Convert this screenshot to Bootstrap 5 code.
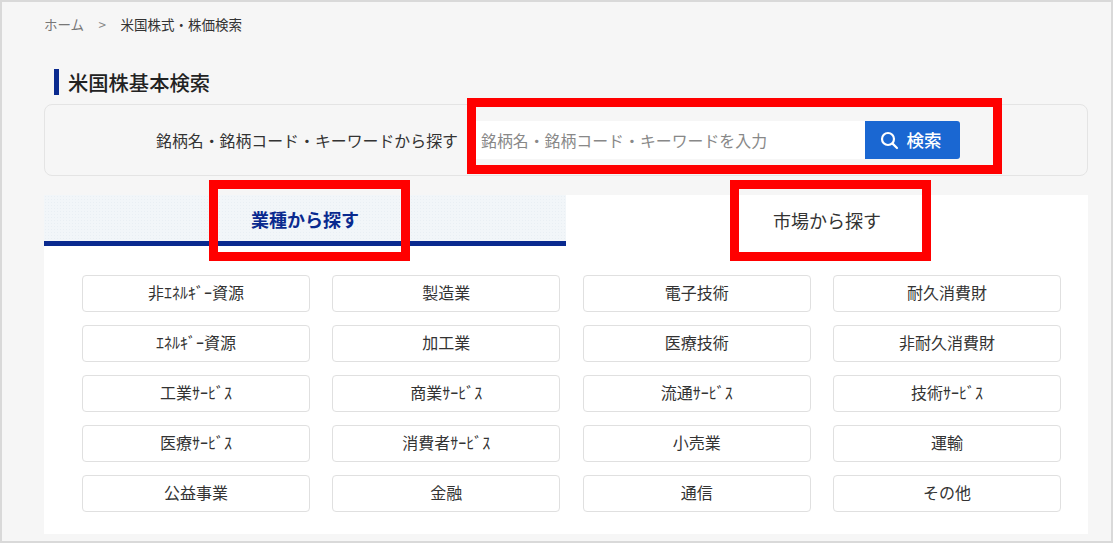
<!DOCTYPE html>
<html lang="ja">
<head>
<meta charset="utf-8">
<title>米国株基本検索</title>
<link href="https://cdn.jsdelivr.net/npm/bootstrap@5.3.0/dist/css/bootstrap.min.css" rel="stylesheet">
<style>
html,body{height:543px;overflow:hidden;background:#f6f6f6}
body{font-family:"Noto Sans CJK JP","Liberation Sans",sans-serif;color:#333;position:relative}
.shot-frame{height:543px;border:2px solid #d9d9d9;padding:0 23px 7px 42px;background:#f6f6f6}
.crumbs{height:44px;margin:0;padding:0;font-size:13.5px;align-items:center;--bs-breadcrumb-margin-bottom:0;--bs-breadcrumb-item-padding-x:14.5px;--bs-breadcrumb-divider-color:#888}
.crumbs a{color:#777;text-decoration:none}
.crumbs .active{color:#333}
.crumbs .breadcrumb-item+.breadcrumb-item::before{content:">";color:#888}
.page-title{margin:23px 0 9px 10px;padding-left:9px;height:26px;line-height:27px;border-left:5px solid #0a2a8f;font-size:20.3px;font-weight:500;color:#222}
.finder{height:72px;border:1px solid #e4e4e4;border-radius:8px;padding-left:111px;background:#f6f6f6}
.finder-label{font-size:15.9px;width:320px;white-space:nowrap;color:#333;padding-top:2px}
.finder-group{width:484px;height:38px}
.finder-group .form-control{border:0;border-radius:0;font-size:15.9px;padding:0 5px;height:38px}
.finder-group .form-control::placeholder{color:#888}
.finder-btn{width:95px;height:38px;background:#1a67d2;color:#fff;border:0;border-radius:0 3px 3px 0;font-size:17.5px;font-weight:500;padding:0 4px 0 0;display:flex;align-items:center;justify-content:center;gap:8px}
.tab-row{margin-top:19px;height:51px}
.tab-cell{flex:1 1 0;display:flex;align-items:center;justify-content:center;font-size:18px;background:#fff;color:#333;padding-bottom:1px}
.tab-cell.on{background-color:#f2f6f9;background-image:radial-gradient(#e9eff4 .6px,transparent .7px);background-size:3px 3px;border-bottom:5px solid #0a2a8f;color:#0a2a8f;font-weight:600;padding-top:3px;padding-bottom:0}
.sector-panel{background:#fff;height:288px;padding:29px 27px 0 38px;display:grid;grid-template-columns:repeat(4,1fr);grid-auto-rows:37px;gap:13px 22.6px}
.sector-btn{display:flex;align-items:center;justify-content:center;background:#fff;border:1px solid #e0e0e0;border-radius:4px;font-size:16px;color:#333;text-decoration:none;padding:0 0 3px}
.red-mark{position:absolute;border:9px solid #f00;pointer-events:none}
.mark-a{left:467px;top:98px;width:535px;height:76px}
.mark-b{left:209px;top:180px;width:201px;height:81px}
.mark-c{left:730px;top:180px;width:201px;height:81px}
</style>
</head>
<body>
<div class="shot-frame">
  <nav aria-label="breadcrumb">
    <ol class="breadcrumb crumbs">
      <li class="breadcrumb-item"><a href="#">ホーム</a></li>
      <li class="breadcrumb-item active" aria-current="page">米国株式・株価検索</li>
    </ol>
  </nav>
  <h1 class="page-title">米国株基本検索</h1>
  <div class="finder d-flex align-items-center">
    <div class="finder-label text-nowrap">銘柄名・銘柄コード・キーワードから探す</div>
    <div class="input-group finder-group flex-nowrap">
      <input type="text" class="form-control" placeholder="銘柄名・銘柄コード・キーワードを入力">
      <button class="btn finder-btn" type="button">
        <svg width="19" height="19" viewBox="0 0 19 19" fill="none" stroke="#fff" stroke-width="2.2" stroke-linecap="round"><circle cx="8" cy="8" r="6"/><path d="M12.6 12.6 17 17"/></svg>
        検索
      </button>
    </div>
  </div>
  <div class="tab-row d-flex">
    <div class="tab-cell on">業種から探す</div>
    <div class="tab-cell">市場から探す</div>
  </div>
  <div class="sector-panel">
    <a class="sector-btn" href="#">非ｴﾈﾙｷﾞｰ資源</a>
    <a class="sector-btn" href="#">製造業</a>
    <a class="sector-btn" href="#">電子技術</a>
    <a class="sector-btn" href="#">耐久消費財</a>
    <a class="sector-btn" href="#">ｴﾈﾙｷﾞｰ資源</a>
    <a class="sector-btn" href="#">加工業</a>
    <a class="sector-btn" href="#">医療技術</a>
    <a class="sector-btn" href="#">非耐久消費財</a>
    <a class="sector-btn" href="#">工業ｻｰﾋﾞｽ</a>
    <a class="sector-btn" href="#">商業ｻｰﾋﾞｽ</a>
    <a class="sector-btn" href="#">流通ｻｰﾋﾞｽ</a>
    <a class="sector-btn" href="#">技術ｻｰﾋﾞｽ</a>
    <a class="sector-btn" href="#">医療ｻｰﾋﾞｽ</a>
    <a class="sector-btn" href="#">消費者ｻｰﾋﾞｽ</a>
    <a class="sector-btn" href="#">小売業</a>
    <a class="sector-btn" href="#">運輸</a>
    <a class="sector-btn" href="#">公益事業</a>
    <a class="sector-btn" href="#">金融</a>
    <a class="sector-btn" href="#">通信</a>
    <a class="sector-btn" href="#">その他</a>
  </div>
</div>
<div class="red-mark mark-a"></div>
<div class="red-mark mark-b"></div>
<div class="red-mark mark-c"></div>
<script src="https://cdn.jsdelivr.net/npm/bootstrap@5.3.0/dist/js/bootstrap.bundle.min.js"></script>
</body>
</html>
